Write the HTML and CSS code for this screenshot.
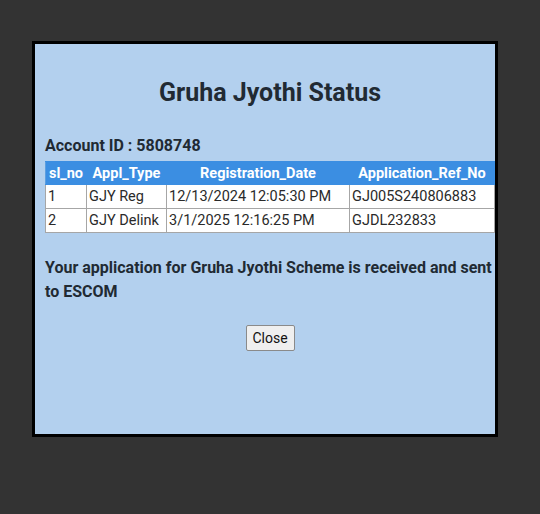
FILE: index.html
```html
<!DOCTYPE html>
<html>
<head>
<meta charset="utf-8">
<link rel="stylesheet" href="styles.css">
</head>
<body>
<div class="modal">
  <h2 class="title">Gruha Jyothi Status</h2>
  <div class="account">Account ID : 5808748</div>
  <table class="status">
    <colgroup>
      <col class="c1"><col class="c2"><col class="c3"><col class="c4">
    </colgroup>
    <thead>
      <tr><th>sl_no</th><th>Appl_Type</th><th>Registration_Date</th><th>Application_Ref_No</th></tr>
    </thead>
    <tbody>
      <tr><td>1</td><td>GJY Reg</td><td>12/13/2024 12:05:30 PM</td><td>GJ005S240806883</td></tr>
      <tr><td>2</td><td>GJY Delink</td><td>3/1/2025 12:16:25 PM</td><td>GJDL232833</td></tr>
    </tbody>
  </table>
  <p class="message">Your application for Gruha Jyothi Scheme is received and sent to ESCOM</p>
  <div class="actions"><button class="close">Close</button></div>
</div>
</body>
</html>
```
FILE: styles.css
```css
html, body {
  margin: 0;
  padding: 0;
}
body {
  background: #333333;
  width: 540px;
  height: 514px;
  overflow: hidden;
  font-family: Roboto, "Liberation Sans", sans-serif;
  color: #212a33;
}
.modal {
  box-sizing: border-box;
  margin: 41px 0 0 32px;
  width: 466px;
  height: 396px;
  border: 3px solid #000;
  background: #b3d0ee;
  padding: 0 0 0 10px;
}
.title {
  margin: 35px 0 0 0;
  font-size: 25px;
  line-height: 28px;
  font-weight: 700;
  text-align: center;
}
.account {
  margin-top: 29px;
  font-size: 16px;
  line-height: 20px;
  font-weight: 700;
}
.status {
  margin-top: 5px;
  width: 449px;
  table-layout: fixed;
  border-collapse: collapse;
  font-size: 14.5px;
}
.c1 { width: 41px; }
.c2 { width: 80px; }
.c3 { width: 183px; }
.c4 { width: 145px; }
.status th {
  background: #3b8ee2;
  color: #fff;
  font-weight: 700;
  height: 22px;
  padding: 0 2px;
  text-align: center;
  border: 1px solid #3b8ee2;
  border-left-color: #5c9fe0;
  white-space: nowrap;
}
.status td {
  background: #fff;
  height: 23px;
  padding: 0 2px;
  border: 1px solid #a6a6a6;
  text-align: left;
  white-space: nowrap;
  color: #2a2a2a;
  font-weight: 400;
}
.message {
  margin: 23px 0 0 0;
  font-size: 16px;
  line-height: 24px;
  font-weight: 700;
}
.actions {
  margin-top: 21px;
  text-align: center;
}
.close {
  font-family: Roboto, "Liberation Sans", sans-serif;
  font-size: 14px;
  color: #111;
  background: #efefef;
  border: 1px solid #8a8a8a;
  border-radius: 2px;
  height: 26px;
  width: 49px;
  padding: 0;
}
```
